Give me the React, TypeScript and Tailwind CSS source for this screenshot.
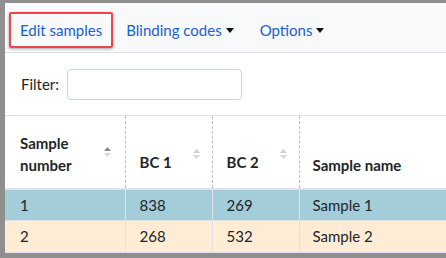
function Caret() {
  return (
    <svg className="ml-1 inline-block" width="8" height="5" viewBox="0 0 8 5">
      <path d="M0 0h8L4 5z" fill="#111" />
    </svg>
  );
}

function SortIcon({ active = false }: { active?: boolean }) {
  return (
    <svg width="7" height="12" viewBox="0 0 7 12">
      <path d="M0 5L3.5 1 7 5z" fill={active ? "#8a8a8a" : "#d0d0d0"} />
      <path d="M0 7h7L3.5 11z" fill="#d8d8d8" />
    </svg>
  );
}

const rows = [
  { n: "1", bc1: "838", bc2: "269", name: "Sample 1", bg: "bg-[#a3cdd9]" },
  { n: "2", bc1: "268", bc2: "532", name: "Sample 2", bg: "bg-[#feecd4]" },
];

export default function App() {
  return (
    <div
      className="h-[258px] w-[446px] overflow-hidden border-t-[3px] border-b-[5px] border-l-[5px] border-[#8f8f8f] bg-white text-[15px] text-[#212529]"
      style={{ fontFamily: "Lato, 'Open Sans', sans-serif" }}
    >
      <nav className="flex h-[50px] items-center gap-[13px] border-b border-[#dee2e6] bg-[#f8f9fa] pt-[5px] pl-[4px]">
        <a className="rounded-[2px] border-2 border-[#f0444b] px-[9px] py-[5px] text-[#1a5fd0] shadow-[0_1px_3px_rgba(0,0,0,0.35)]">
          Edit samples
        </a>
        <a className="flex items-center text-[#1a5fd0]">
          Blinding codes
          <Caret />
        </a>
        <a className="ml-[13px] flex items-center text-[#1a5fd0]">
          Options
          <Caret />
        </a>
      </nav>

      <div className="flex h-[62px] items-center gap-[8px] pl-[16px]">
        <label>Filter:</label>
        <input className="h-[31px] w-[175px] rounded-[4px] border border-[#ced4da] bg-white" />
      </div>

      <table className="w-full border-collapse border-t border-[#dee2e6]">
        <thead>
          <tr className="h-[73px] border-b-2 border-[#dee2e6] font-bold">
            <th className="w-[120px] border-r border-dashed border-[#bdbdbd] pr-[14px] pb-[12px] pl-[15px] text-left align-bottom leading-[22px]">
              <div className="flex items-center justify-between">
                <span>
                  Sample
                  <br />
                  number
                </span>
                <span className="mb-[4px]">
                  <SortIcon active />
                </span>
              </div>
            </th>
            <th className="w-[87px] border-r border-dashed border-[#bdbdbd] pr-[12px] pb-[12px] pl-[14px] text-left align-bottom leading-[22px]">
              <div className="flex items-center justify-between">
                <span>BC 1</span>
                <span className="mb-[16px]">
                  <SortIcon />
                </span>
              </div>
            </th>
            <th className="w-[87px] border-r border-dashed border-[#bdbdbd] pr-[12px] pb-[12px] pl-[14px] text-left align-bottom leading-[22px]">
              <div className="flex items-center justify-between">
                <span>BC 2</span>
                <span className="mb-[16px]">
                  <SortIcon />
                </span>
              </div>
            </th>
            <th className="pb-[12px] pl-[13px] text-left align-bottom leading-[22px]">Sample name</th>
          </tr>
        </thead>
        <tbody>
          {rows.map((r) => (
            <tr key={r.n} className={`h-[32px] border-b border-[#dee2e6] ${r.bg}`}>
              <td className="border-r border-[#dee2e6] pl-[15px]">{r.n}</td>
              <td className="border-r border-[#dee2e6] pl-[14px]">{r.bc1}</td>
              <td className="border-r border-[#dee2e6] pl-[14px]">{r.bc2}</td>
              <td className="pl-[13px]">{r.name}</td>
            </tr>
          ))}
        </tbody>
      </table>
    </div>
  );
}
